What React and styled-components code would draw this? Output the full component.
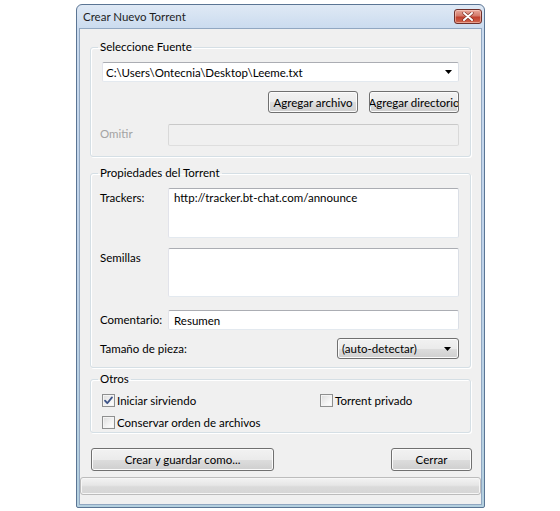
import React, { useState } from 'react'
import styled, { createGlobalStyle } from 'styled-components'

const GlobalStyle = createGlobalStyle`
  html, body {
    margin: 0;
    padding: 0;
    background: #fff;
  }
  body {
    font-family: Lato, 'Liberation Sans', sans-serif;
    font-size: 11.5px;
    color: #000;
  }
  * {
    box-sizing: border-box;
  }
`

const Arrow = () => (
  <svg width='7' height='4' viewBox='0 0 7 4'>
    <path d='M0 0 L7 0 L3.5 4 Z' fill='#000' />
  </svg>
)

const CheckMark = () => (
  <svg width='11' height='11' viewBox='0 0 11 11'>
    <path
      d='M2 5.6 L4.3 8.2 L9 2.4'
      fill='none'
      stroke='#3e5488'
      strokeWidth='1.8'
      strokeLinecap='round'
      strokeLinejoin='round'
    />
  </svg>
)

const CloseGlyph = () => (
  <svg width='12' height='9' viewBox='0 0 12 9'>
    <path
      d='M2 1 L10 8 M10 1 L2 8'
      stroke='#7a2a20'
      strokeWidth='3.2'
      strokeLinecap='round'
    />
    <path
      d='M2 1 L10 8 M10 1 L2 8'
      stroke='#fff'
      strokeWidth='2'
      strokeLinecap='round'
    />
  </svg>
)

const App = () => {
  const [startSeeding, setStartSeeding] = useState(true)
  const [privateTorrent, setPrivateTorrent] = useState(false)
  const [keepOrder, setKeepOrder] = useState(false)

  return (
    <>
      <GlobalStyle />
      <WINDOW>
        <TITLEBAR>
          <TITLE>Crear Nuevo Torrent</TITLE>
          <CLOSEBUTTON>
            <CloseGlyph />
          </CLOSEBUTTON>
        </TITLEBAR>
        <CLIENT>
          <GROUP $top={11}>
            <LEGEND>Seleccione Fuente</LEGEND>
            <COMBO>
              <COMBOTEXT>C:\Users\Ontecnia\Desktop\Leeme.txt</COMBOTEXT>
              <Arrow />
            </COMBO>
            <BUTTONROW>
              <BUTTON $width={90}>
                <span>Agregar archivo</span>
              </BUTTON>
              <BUTTON $width={90}>
                <span>Agregar directorio</span>
              </BUTTON>
            </BUTTONROW>
            <FIELDROW $top={11}>
              <LABEL $disabled>Omitir</LABEL>
              <TEXTBOX disabled $height={22} />
            </FIELDROW>
          </GROUP>

          <GROUP $top={9} $bottom={8}>
            <LEGEND>Propiedades del Torrent</LEGEND>
            <FIELDROW>
              <LABEL>Trackers:</LABEL>
              <TEXTAREA
                $height={50}
                defaultValue='http://tracker.bt-chat.com/announce'
              />
            </FIELDROW>
            <FIELDROW $top={10}>
              <LABEL>Semillas</LABEL>
              <TEXTAREA $height={49} defaultValue='' />
            </FIELDROW>
            <FIELDROW $top={13} $center>
              <LABEL $center>Comentario:</LABEL>
              <TEXTBOX $height={20} defaultValue='Resumen' />
            </FIELDROW>
            <PIECEROW>
              <LABEL $center>Tamaño de pieza:</LABEL>
              <DROPDOWN>
                <span>(auto-detectar)</span>
                <Arrow />
              </DROPDOWN>
            </PIECEROW>
          </GROUP>

          <GROUP $top={4} $pad={0} $bottom={2}>
            <LEGEND>Otros</LEGEND>
            <CHECKGRID>
              <CHECKITEM onClick={() => setStartSeeding(!startSeeding)}>
                <CHECKBOX>{startSeeding && <CheckMark />}</CHECKBOX>
                Iniciar sirviendo
              </CHECKITEM>
              <CHECKITEM onClick={() => setPrivateTorrent(!privateTorrent)}>
                <CHECKBOX>{privateTorrent && <CheckMark />}</CHECKBOX>
                Torrent privado
              </CHECKITEM>
              <CHECKITEM onClick={() => setKeepOrder(!keepOrder)}>
                <CHECKBOX>{keepOrder && <CheckMark />}</CHECKBOX>
                Conservar orden de archivos
              </CHECKITEM>
            </CHECKGRID>
          </GROUP>

          <FOOTER>
            <BUTTON $width={183} $height={23}>
              <span>Crear y guardar como...</span>
            </BUTTON>
            <BUTTON $width={81} $height={23}>
              <span>Cerrar</span>
            </BUTTON>
          </FOOTER>
          <PROGRESS />
        </CLIENT>
      </WINDOW>
    </>
  )
}

export default App

const WINDOW = styled.div`
  width: 409px;
  height: 504px;
  margin: 4px 0 0 76px;
  padding: 0 2px 2px 2px;
  border: 1px solid #5b7594;
  border-radius: 6px 6px 2px 2px;
  background: linear-gradient(
    180deg,
    #dfe9f5 0%,
    #c9daee 5%,
    #bed2e9 50%,
    #b4d0df 100%
  );
  display: flex;
  flex-direction: column;
`
const TITLEBAR = styled.div`
  height: 23px;
  display: flex;
  align-items: center;
  justify-content: space-between;
  padding-left: 4px;
`
const TITLE = styled.div`
  font-size: 11.5px;
  color: #1e1e1e;
`
const CLOSEBUTTON = styled.div`
  width: 28px;
  height: 15px;
  border: 1px solid #6e2f2a;
  border-radius: 3px;
  background: linear-gradient(
    180deg,
    #e9a99c 0%,
    #d47a6a 45%,
    #c1402e 55%,
    #d0684f 100%
  );
  box-shadow: inset 0 0 0 1px rgba(255, 220, 210, 0.5);
  display: flex;
  align-items: center;
  justify-content: center;
`
const CLIENT = styled.div`
  flex: 1;
  display: flex;
  flex-direction: column;
  background: #f0f0f0;
  border: 1px solid #91a7c1;
`
const GROUP = styled.fieldset`
  margin: ${(props) => props.$top}px 10px 0 10px;
  padding: ${(props) => props.$pad ?? 8}px 11px
    ${(props) => props.$bottom ?? 10}px 11px;
  border: 1px solid #d5dfe5;
  border-radius: 3px;
  box-shadow: inset 1px 1px 0 #fff, 1px 1px 0 #fff;
  min-width: 0;
`
const LEGEND = styled.legend`
  margin-left: -4px;
  padding: 0 2px;
  line-height: 14px;
  color: #000;
`
const COMBO = styled.div`
  height: 20px;
  display: flex;
  align-items: center;
  justify-content: space-between;
  padding: 0 6px 0 3px;
  background: #fff;
  border: 1px solid;
  border-color: #abadb3 #dbdfe6 #e3e9ef #e2e3ea;
  border-radius: 2px;
`
const COMBOTEXT = styled.span`
  white-space: nowrap;
`
const BUTTONROW = styled.div`
  display: flex;
  justify-content: flex-end;
  gap: 11px;
  margin-top: 9px;
`
const BUTTON = styled.div`
  width: ${(props) => props.$width}px;
  height: ${(props) => props.$height ?? 22}px;
  display: flex;
  align-items: center;
  justify-content: center;
  overflow: hidden;
  white-space: nowrap;
  color: #000;
  border: 1px solid #707070;
  border-radius: 3px;
  background: linear-gradient(
    180deg,
    #f2f2f2 0%,
    #ebebeb 50%,
    #dddddd 51%,
    #cfcfcf 100%
  );
  box-shadow: inset 0 0 0 1px #fbfbfb;
  span {
    flex: none;
  }
`
const FIELDROW = styled.div`
  display: flex;
  align-items: ${(props) => (props.$center ? 'center' : 'flex-start')};
  margin-top: ${(props) => props.$top ?? 0}px;
`
const LABEL = styled.div`
  width: 66px;
  flex: none;
  margin-left: -2px;
  margin-right: 2px;
  padding-top: ${(props) => (props.$center ? 0 : 3)}px;
  line-height: 14px;
  white-space: nowrap;
  color: ${(props) => (props.$disabled ? '#a3a3a3' : '#000')};
`
const TEXTBOX = styled.input`
  flex: 1;
  min-width: 0;
  height: ${(props) => props.$height}px;
  padding: 0 5px;
  font: inherit;
  color: #000;
  border: 1px solid;
  border-color: #abadb3 #dbdfe6 #e3e9ef #e2e3ea;
  border-radius: 2px;
  background: #fff;
  outline: none;
  &:disabled {
    background: #f0f0f0;
    border-color: #c9c9c9 #d9d9d9 #dedede #d9d9d9;
  }
`
const TEXTAREA = styled.textarea`
  flex: 1;
  min-width: 0;
  height: ${(props) => props.$height}px;
  padding: 2px 5px;
  font: inherit;
  line-height: 14px;
  color: #000;
  resize: none;
  overflow: hidden;
  border: 1px solid;
  border-color: #abadb3 #dbdfe6 #e3e9ef #e2e3ea;
  border-radius: 2px;
  background: #fff;
  outline: none;
`
const PIECEROW = styled.div`
  display: flex;
  align-items: center;
  justify-content: space-between;
  margin-top: 8px;
`
const DROPDOWN = styled.div`
  width: 122px;
  height: 21px;
  display: flex;
  align-items: center;
  justify-content: space-between;
  padding: 0 7px 0 4px;
  border: 1px solid #707070;
  border-radius: 3px;
  background: linear-gradient(
    180deg,
    #f2f2f2 0%,
    #ebebeb 50%,
    #dddddd 51%,
    #cfcfcf 100%
  );
  box-shadow: inset 0 0 0 1px #fbfbfb;
`
const CHECKGRID = styled.div`
  display: grid;
  grid-template-columns: 218px 1fr;
  row-gap: 6px;
  padding-top: 6px;
`
const CHECKITEM = styled.div`
  display: flex;
  align-items: center;
  gap: 2px;
  height: 16px;
  white-space: nowrap;
  cursor: default;
`
const CHECKBOX = styled.div`
  width: 13px;
  height: 13px;
  flex: none;
  display: flex;
  align-items: center;
  justify-content: center;
  border: 1px solid #8e8f8f;
  background: linear-gradient(135deg, #dcdcdc 0%, #f4f4f4 60%, #ffffff 100%);
  box-shadow: inset 0 0 0 1px #f4f4f4;
`
const FOOTER = styled.div`
  display: flex;
  justify-content: space-between;
  margin: 15px 9px 0 11px;
`
const PROGRESS = styled.div`
  height: 18px;
  margin-top: 6px;
  border: 1px solid #bcbcbc;
  border-radius: 3px;
  background: linear-gradient(
    180deg,
    #f3f3f3 0%,
    #e6e6e6 45%,
    #dadada 55%,
    #d6d6d6 100%
  );
  box-shadow: inset 0 0 0 1px #f6f6f6;
`
